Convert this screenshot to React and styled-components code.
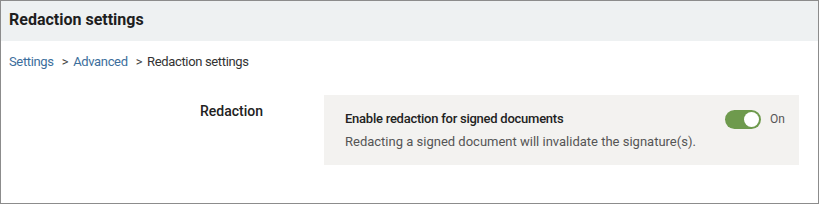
import React from "react";
import styled, { createGlobalStyle } from "styled-components";

const Global = createGlobalStyle`
body {
    margin: 0;
    background: #ffffff;
    font-family: Roboto, "Liberation Sans", sans-serif;
}
`;

const App = () => {
    return (
        <>
            <Global />
            <Frame>
                <Header>
                    <Title>Redaction settings</Title>
                </Header>
                <Crumbs>
                    <Crumb href="#">Settings</Crumb>
                    <Sep>&gt;</Sep>
                    <Crumb href="#">Advanced</Crumb>
                    <Sep>&gt;</Sep>
                    <Current>Redaction settings</Current>
                </Crumbs>
                <Row>
                    <Label>Redaction</Label>
                    <Panel>
                        <PanelText>
                            <PanelTitle>Enable redaction for signed documents</PanelTitle>
                            <PanelDesc>Redacting a signed document will invalidate the signature(s).</PanelDesc>
                        </PanelText>
                        <ToggleWrap>
                            <Toggle on>
                                <Knob />
                            </Toggle>
                            <ToggleLabel>On</ToggleLabel>
                        </ToggleWrap>
                    </Panel>
                </Row>
            </Frame>
        </>
    )
}

export default App;

const Frame = styled.div`
width: 817px;
height: 202px;
border: 1px solid #8c8c8c;
background: #fff;
overflow: hidden;
`;

const Header = styled.div`
height: 40px;
background-color: #eef1f2;
display: flex;
align-items: center;
padding-left: 8px;
`;

const Title = styled.div`
font-size: 16px;
font-weight: 700;
color: #1e1e1e;
margin-top: -3px;
`;

const Crumbs = styled.div`
display: flex;
align-items: center;
padding: 11px 0 0 8px;
font-size: 13px;
letter-spacing: -0.35px;
height: 18px;
`;

const Crumb = styled.a`
color: #3c6e9c;
text-decoration: none;
`;

const Sep = styled.span`
color: #444;
margin: 0 5px 0 8px;
`;

const Current = styled.span`
color: #333;
`;

const Row = styled.div`
display: flex;
margin-top: 25px;
`;

const Label = styled.div`
width: 262px;
text-align: right;
padding-top: 8px;
font-size: 14px;
font-weight: 500;
color: #222;
`;

const Panel = styled.div`
margin-left: 61px;
width: 475px;
height: 70px;
background-color: #f3f2f0;
display: flex;
justify-content: space-between;
padding: 0 0 0 21px;
box-sizing: border-box;
`;

const PanelText = styled.div`
display: flex;
flex-direction: column;
padding-top: 16px;
`;

const PanelTitle = styled.div`
font-size: 13px;
font-weight: 500;
letter-spacing: -0.25px;
color: #222;
`;

const PanelDesc = styled.div`
font-size: 13px;
color: #555;
margin-top: 8px;
`;

const ToggleWrap = styled.div`
display: flex;
align-items: center;
height: 18px;
margin-top: 15px;
padding-right: 14px;
`;

const Toggle = styled.div`
width: 36px;
height: 19px;
border-radius: 10px;
background-color: ${p => p.on ? "#6e9a4d" : "#bbb"};
display: flex;
align-items: center;
justify-content: ${p => p.on ? "flex-end" : "flex-start"};
padding: 0 2px;
box-sizing: border-box;
`;

const Knob = styled.div`
width: 15px;
height: 15px;
border-radius: 50%;
background: #fff;
`;

const ToggleLabel = styled.div`
font-size: 12px;
color: #555;
margin-left: 9px;
`;
